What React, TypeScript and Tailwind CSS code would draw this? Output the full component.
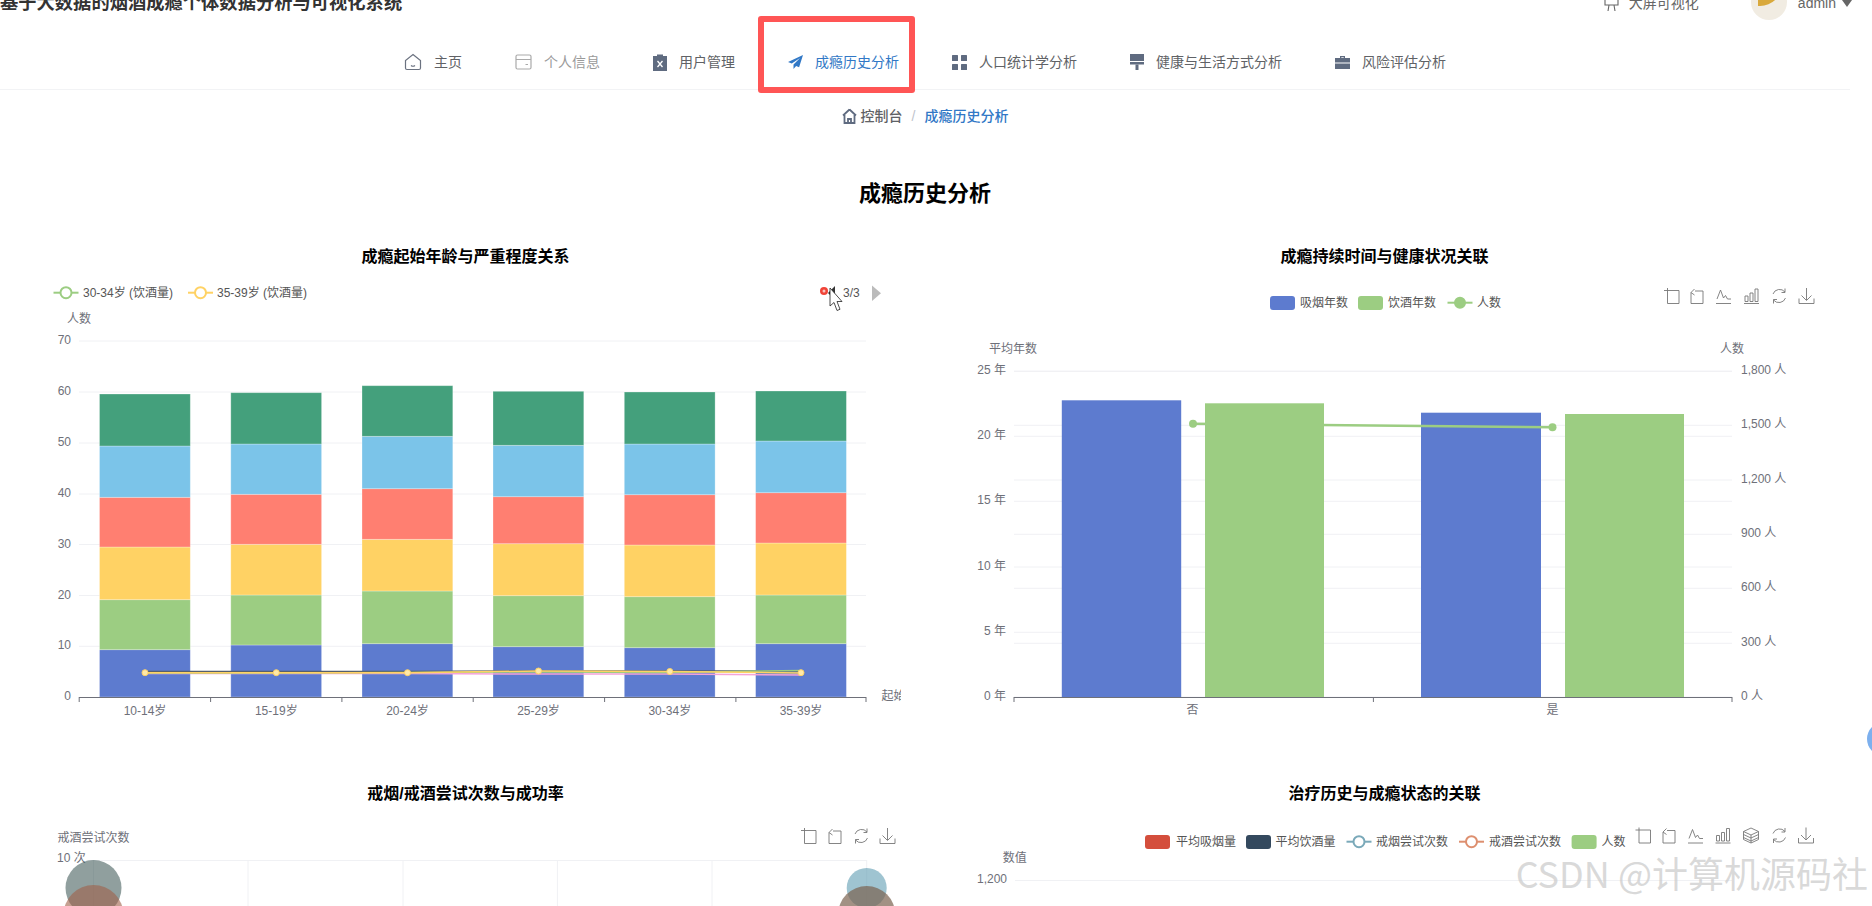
import type { ReactNode } from 'react'

const FONT = "font-['Liberation_Sans','Noto_Sans_CJK_SC',sans-serif]"

function HomeIcon() {
	return (
		<svg width="18" height="18" viewBox="0 0 18 18" fill="none" stroke="#6b7280" strokeWidth="1.2">
			<path d="M9 1.5 16.5 7.5V15a1.5 1.5 0 0 1-1.5 1.5H3A1.5 1.5 0 0 1 1.500 15V7.500Z" />
			<path d="M7 12.500q2 1.500 4 0" />
		</svg>
	)
}

function CardIcon() {
	return (
		<svg width="17" height="16" viewBox="0 0 17 16" fill="none" stroke="#aaaaaa" strokeWidth="1.200">
			<rect x="1" y="1" width="15" height="14" rx="1.500" />
			<path d="M1 5.500h15M10.500 10.500h2.500" />
		</svg>
	)
}

function ClipboardIcon() {
	return (
		<svg width="14" height="17" viewBox="0 0 14 17">
			<path d="M0 2h4V0.500h6V2h4v15H0Z" fill="#5f6b80" />
			<path d="M4.500 7 9.500 13M9.500 7 4.500 13" stroke="#fff" strokeWidth="1.300" />
		</svg>
	)
}

function PlaneIcon() {
	return (
		<svg width="15" height="14" viewBox="0 0 15 14">
			<path d="M15 0 0 7l3.800 1.500L12 3 5.500 9.500V14l2.600-3 3 1.200Z" fill="#3178c6" />
		</svg>
	)
}

function GridIcon() {
	return (
		<svg width="15" height="15" viewBox="0 0 15 15" fill="#5f6b80">
			<rect width="6" height="6" rx="0.500" />
			<rect x="9" width="6" height="6" rx="0.500" />
			<rect y="9" width="6" height="6" rx="0.500" />
			<rect x="9" y="9" width="6" height="6" rx="0.500" />
		</svg>
	)
}

function BrushIcon() {
	return (
		<svg width="14" height="16" viewBox="0 0 14 16" fill="#5f6b80">
			<rect width="14" height="7" />
			<rect y="8" width="14" height="2.500" />
			<rect x="5.500" y="10.500" width="3" height="5.500" />
		</svg>
	)
}

function CaseIcon() {
	return (
		<svg width="15" height="14" viewBox="0 0 15 14" fill="#5f6b80">
			<path d="M5 3V1h5v2h-1.300V2.200H6.300V3Z" />
			<path d="M0 3h15v4.500H0ZM0 8.500h15V14H0Z" />
		</svg>
	)
}

function NavItem({ icon, label, className }: { icon: ReactNode; label: string; className: string }) {
	return (
		<div className={`flex items-center gap-[12px] text-[14px] ${className}`}>
			{icon}
			<span>{label}</span>
		</div>
	)
}

function Label({
	x,
	y,
	children,
	anchor = 'start',
	fill = '#6e7079',
	size = 12,
}: {
	x: number
	y: number
	children: ReactNode
	anchor?: 'start' | 'middle' | 'end'
	fill?: string
	size?: number
}) {
	return (
		<text x={x} y={y} textAnchor={anchor} dominantBaseline="central" fill={fill} fontSize={size}>
			{children}
		</text>
	)
}

function Swatch({ x, y, color }: { x: number; y: number; color: string }) {
	return <rect x={x} y={y - 7} width="25" height="14" rx="3" fill={color} />
}

function LineMark({ x, y, color, filled }: { x: number; y: number; color: string; filled?: boolean }) {
	return (
		<g>
			<path d={`M${x} ${y}h25`} stroke={color} strokeWidth="2" />
			<circle cx={x + 12.5} cy={y} r={filled ? 5 : 5.500} fill={filled ? color : '#fff'} stroke={color} strokeWidth="2" />
		</g>
	)
}

function Tool({ x, y, kind }: { x: number; y: number; kind: string }) {
	return (
		<g transform={`translate(${x} ${y})`} fill="none" stroke="#777" strokeWidth="0.900">
			{kind === 'crop' && <path d="M0 2.500H15V15.500H3.500V0" />}
			{kind === 'back' && <path d="M5 3H13V15.500H1V4.500M1 4.500 4.500 1M1 4.500 4.500 7" />}
			{kind === 'line' && <path d="M0 15.500H15M1 11 4.500 2 7.500 10 9.500 7.500 11.500 11H15" />}
			{kind === 'bar' && <path d="M0 15.500H15M1 8H4V13.500H1ZM6 5H9V13.500H6ZM11 1H14V13.500H11Z" />}
			{kind === 'stack' && (
				<path d="M8 0.500 15.500 4V12L8 15.500 0.500 12V4ZM0.500 4 8 7.500 15.500 4M0.500 7 8 10.500 15.500 7M0.500 10 8 13.500 15.500 10M8 7.500V15.500" />
			)}
			{kind === 'refresh' && (
				<path d="M2 6A7 7 0 0 1 14 4M14 0.500V4.500H10.500M14.500 10A7 7 0 0 1 2.500 12M2.500 15.500V11.500H6" />
			)}
			{kind === 'save' && <path d="M7.500 0V12M2.500 7.500 7.500 12.500 12.500 7.500M0 10.500V15.500H15V10.500" />}
		</g>
	)
}

const stackColors = ['#5d7bcf', '#9ccd82', '#ffd264', '#ff7f71', '#7bc4e9', '#44a07c']
const stackX = [98.5, 229.800, 361, 492, 623.300, 754.600]
const stackTops = [
	[649.700, 599.700, 547, 497.300, 446, 394],
	[645, 595, 544.300, 494.300, 444, 392.700],
	[643.700, 591, 539.300, 488.700, 436.300, 385.700],
	[646.700, 595.700, 543.700, 496.700, 445.300, 391.300],
	[647.700, 596.700, 545, 494.700, 444, 392],
	[643.700, 595, 543, 492.700, 441, 391],
]
const centers = [144, 275.300, 406.500, 537.500, 668.800, 800]

function linePath(ys: number[]) {
	return ys.map((y, i) => `${i === 0 ? 'M' : 'L'}${centers[i]} ${y}`).join(' ')
}

function AgeChart() {
	const ticks = [
		[70, 341],
		[60, 392],
		[50, 443],
		[40, 494],
		[30, 544.500],
		[20, 595.500],
		[10, 646.300],
	]
	const cats = ['10-14岁', '15-19岁', '20-24岁', '25-29岁', '30-34岁', '35-39岁']
	return (
		<svg className="block" width="870" height="511" viewBox="30 270 870 511">
			<LineMark x={52.500} y={292.700} color="#9ccd82" />
			<Label x={82} y={292.700} fill="#555">30-34岁 (饮酒量)</Label>
			<LineMark x={187} y={292.700} color="#ffd264" />
			<Label x={216} y={292.700} fill="#555">35-39岁 (饮酒量)</Label>
			<circle cx="823" cy="291" r="4" fill="#f04438" />
			<circle cx="823" cy="291" r="1.500" fill="#f8c4c0" />
			<path d="M834 286V300L827 293Z" fill="#333" />
			<Label x={842} y={292.700} fill="#555">3/3</Label>
			<path d="M871 285.500V301L880 293.200Z" fill="#bbb" />
			<path d="M829 288V306L833 302.500 836 310.500 839 309.300 836 301.500 841 301.500Z" fill="#fff" stroke="#222" strokeWidth="0.800" />
			<Label x={66} y={319}>人数</Label>
			{ticks.map(([v, y]) => (
				<g key={v}>
					<path d={`M78 ${y}H865`} stroke="#f0f1f4" strokeWidth="1" />
					<Label x={70} y={y - 1} anchor="end">{v}</Label>
				</g>
			))}
			<Label x={70} y={696} anchor="end">0</Label>
			{stackTops.map((tops, i) =>
				tops.map((top, j) => (
					<rect
						key={`${i}-${j}`}
						x={stackX[i]}
						y={top}
						width="90.800"
						height={(j === 0 ? 697 : tops[j - 1]) - top}
						fill={stackColors[j]}
						stroke="#fff"
						strokeOpacity="0.350"
						strokeWidth="0.800"
					/>
				)),
			)}
			<g fill="none" strokeWidth="1.500">
				<path d={linePath([673.500, 673.500, 673.500, 674, 674, 675])} stroke="#f4a3d8" />
				<path d={linePath([671.500, 671.500, 671.500, 671, 671, 671])} stroke="#555f6e" />
				<path d={linePath([673, 673, 672.500, 672, 672.500, 670.500])} stroke="#9ccd82" />
				<path d={linePath([672.700, 672.700, 672.700, 671, 671.500, 673])} stroke="#ffd264" />
			</g>
			{centers.map((x, i) => (
				<circle key={x} cx={x} cy={i === 3 ? 671 : i === 4 ? 671.500 : 672.700} r="3" fill="#ffe9a8" stroke="#ffd264" strokeWidth="1" />
			))}
			<path d="M78 697.500H865" stroke="#6e7079" strokeWidth="1" />
			{[78.200, 209.600, 340.900, 472.200, 603.600, 734.900, 865].map((x) => (
				<path key={x} d={`M${x} 697V702`} stroke="#6e7079" strokeWidth="1" />
			))}
			{cats.map((c, i) => (
				<Label key={c} x={centers[i]} y={710.700} anchor="middle">{c}</Label>
			))}
			<Label x={880.500} y={696}>起始年龄</Label>
		</svg>
	)
}

function DurationChart() {
	const left = [
		['25 年', 371.300],
		['20 年', 436.300],
		['15 年', 501.300],
		['10 年', 567],
		['5 年', 632.300],
		['0 年', 697.300],
	] as const
	const right = [
		['1,800 人', 371.300],
		['1,500 人', 425.300],
		['1,200 人', 480],
		['900 人', 534.300],
		['600 人', 588.300],
		['300 人', 643.300],
		['0 人', 697.300],
	] as const
	const tools = [
		['crop', 1663],
		['back', 1689],
		['line', 1715],
		['bar', 1743],
		['refresh', 1770],
		['save', 1798],
	] as const
	return (
		<svg className="block" width="870" height="511" viewBox="949 270 870 511">
			<Swatch x={1269} y={303} color="#5d7bcf" />
			<Label x={1299} y={302.700} fill="#555">吸烟年数</Label>
			<Swatch x={1357} y={303} color="#9ccd82" />
			<Label x={1387} y={302.700} fill="#555">饮酒年数</Label>
			<LineMark x={1446.500} y={302.700} color="#9ccd82" filled />
			<Label x={1476} y={302.700} fill="#555">人数</Label>
			{tools.map(([k, x]) => (
				<Tool key={k} x={x} y={288} kind={k} />
			))}
			<Label x={988} y={348.700}>平均年数</Label>
			<Label x={1719} y={348.700}>人数</Label>
			{left.map(([t, y]) => (
				<g key={t}>
					<path d={`M1013 ${y}H1731`} stroke="#f0f1f4" strokeWidth="1" />
					<Label x={1005} y={y - 1} anchor="end">{t}</Label>
				</g>
			))}
			{right.map(([t, y]) => (
				<g key={t}>
					<path d={`M1013 ${y}H1731`} stroke="#f0f1f4" strokeWidth="1" />
					<Label x={1740} y={y - 1}>{t}</Label>
				</g>
			))}
			<rect x="1060.800" y="400.300" width="119.400" height="297" fill="#5d7bcf" />
			<rect x="1420" y="412.700" width="120" height="284.600" fill="#5d7bcf" />
			<path d="M1192 423.700 1551.500 427.300" stroke="#9ccd82" strokeWidth="2.500" />
			<circle cx="1192" cy="423.700" r="4" fill="#9ccd82" />
			<circle cx="1551.500" cy="427.300" r="4" fill="#9ccd82" />
			<rect x="1204" y="403.300" width="119" height="294" fill="#9ccd82" />
			<rect x="1564" y="414" width="119" height="283.300" fill="#9ccd82" />
			<path d="M1013 697.500H1731" stroke="#6e7079" strokeWidth="1" />
			{[1013, 1372.400, 1731].map((x) => (
				<path key={x} d={`M${x} 697V702`} stroke="#6e7079" strokeWidth="1" />
			))}
			<Label x={1191.500} y={710} anchor="middle">否</Label>
			<Label x={1551.500} y={710} anchor="middle">是</Label>
		</svg>
	)
}

function QuitChart() {
	const tools = [
		['crop', 800],
		['back', 827],
		['refresh', 852],
		['save', 879],
	] as const
	return (
		<svg className="block" width="870" height="120" viewBox="30 807 870 120">
			{tools.map(([k, x]) => (
				<Tool key={k} x={x} y={828} kind={k} />
			))}
			<Label x={56.500} y={837.700}>戒酒尝试次数</Label>
			<Label x={56} y={858}>10 次</Label>
			<path d="M85 860.500H866" stroke="#f0f1f4" strokeWidth="1" />
			{[92.500, 247, 402, 556.400, 711, 865.700].map((x) => (
				<path key={x} d={`M${x} 860V930`} stroke="#f0f1f4" strokeWidth="1" />
			))}
			<circle cx="92.500" cy="888" r="28" fill="#34504f" fillOpacity="0.550" />
			<circle cx="92.500" cy="915" r="30" fill="#a0604a" fillOpacity="0.600" />
			<circle cx="865.700" cy="888" r="20" fill="#5f9db3" fillOpacity="0.600" />
			<circle cx="865.700" cy="914.500" r="28.500" fill="#7a6250" fillOpacity="0.700" />
		</svg>
	)
}

function TreatmentChart() {
	const tools = [
		['crop', 1634.500],
		['back', 1661],
		['line', 1687],
		['bar', 1714.500],
		['stack', 1742],
		['refresh', 1770],
		['save', 1797.500],
	] as const
	return (
		<svg className="block" width="870" height="120" viewBox="949 807 870 120">
			<Swatch x={1144} y={842} color="#d44e3c" />
			<Label x={1175} y={841.700} fill="#555">平均吸烟量</Label>
			<Swatch x={1245} y={842} color="#34495e" />
			<Label x={1274.500} y={841.700} fill="#555">平均饮酒量</Label>
			<LineMark x={1345.500} y={841.700} color="#7aa9b9" />
			<Label x={1375} y={841.700} fill="#555">戒烟尝试次数</Label>
			<LineMark x={1458} y={841.700} color="#dd8f6f" />
			<Label x={1488} y={841.700} fill="#555">戒酒尝试次数</Label>
			<Swatch x={1570.600} y={842} color="#9ccd82" />
			<Label x={1600.500} y={841.700} fill="#555">人数</Label>
			{tools.map(([k, x]) => (
				<Tool key={k} x={x} y={827.500} kind={k} />
			))}
			<Label x={1001.700} y={857.700}>数值</Label>
			<Label x={1006} y={879} anchor="end">1,200</Label>
			<path d="M1014 880.500H1731" stroke="#f0f1f4" strokeWidth="1" />
		</svg>
	)
}

function Panel({ title, children }: { title: string; children: ReactNode }) {
	return (
		<section className="w-[870px]">
			<h3 className="flex h-[26px] items-center justify-center text-[16px] font-bold text-black">{title}</h3>
			{children}
		</section>
	)
}

export default function App() {
	return (
		<div className={`relative h-[906px] w-[1872px] overflow-hidden bg-white ${FONT}`}>
			<div className="w-[1850px]">
				<div className="-mt-[27px] flex h-[60px] w-[1872px] items-center justify-between">
					<h1 className="text-[18.300px] font-bold whitespace-nowrap text-[#333]">
						基于大数据的烟酒成瘾个体数据分析与可视化系统
					</h1>
					<div className="flex items-center text-[14px] text-[#666]">
						<svg width="15" height="16" viewBox="0 0 15 16" fill="none" stroke="#666" strokeWidth="1.100">
							<path d="M1 1h13v9H1ZM4 16l1-6M11 16l-1-6" />
						</svg>
						<span className="ml-[10px]">大屏可视化</span>
						<div className="relative ml-[52px] h-[36px] w-[36px] -translate-y-[1px] overflow-hidden rounded-full bg-[#f1ece2]">
							<div className="h-[22px] w-[24px] translate-x-[7px] rounded-br-full bg-[#d9a93c]" />
						</div>
						<span className="ml-[11px]">admin</span>
						<svg className="mr-[20px] ml-[6px]" width="10" height="7" viewBox="0 0 10 7">
							<path d="M0 0h10L5 7Z" fill="#666" />
						</svg>
					</div>
				</div>

				<nav className="flex h-[57px] items-center justify-center gap-[53px] border-b border-[#f2f3f5] pt-[2px]">
					<NavItem icon={<HomeIcon />} label="主页" className="text-[#606266]" />
					<NavItem icon={<CardIcon />} label="个人信息" className="text-[#9a9a9a]" />
					<NavItem icon={<ClipboardIcon />} label="用户管理" className="text-[#606266]" />
					<NavItem icon={<PlaneIcon />} label="成瘾历史分析" className="text-[#3178c6]" />
					<NavItem icon={<GridIcon />} label="人口统计学分析" className="text-[#606266]" />
					<NavItem icon={<BrushIcon />} label="健康与生活方式分析" className="text-[#606266]" />
					<NavItem icon={<CaseIcon />} label="风险评估分析" className="text-[#606266]" />
				</nav>

				<div className="flex h-[52px] items-center justify-center text-[14px]">
					<svg width="15" height="16" viewBox="0 0 15 16" fill="none" stroke="#5f6b80" strokeWidth="1.800">
						<path d="M7.500 1.500 14 7.500M7.500 1.500 1 7.500M2.500 7V15H12.500V7M6 15V11H9V15" />
					</svg>
					<span className="ml-[4px] font-medium text-[#606266]">控制台</span>
					<span className="mx-[9px] text-[#c0c4cc]">/</span>
					<span className="font-medium text-[#3178c6]">成瘾历史分析</span>
				</div>

				<h2 className="flex h-[102px] items-center justify-center text-[22px] font-bold text-black">成瘾历史分析</h2>

				<div className="flex justify-center gap-[49px]">
					<Panel title="成瘾起始年龄与严重程度关系">
						<AgeChart />
					</Panel>
					<Panel title="成瘾持续时间与健康状况关联">
						<DurationChart />
					</Panel>
				</div>
				<div className="flex justify-center gap-[49px]">
					<Panel title="戒烟/戒酒尝试次数与成功率">
						<QuitChart />
					</Panel>
					<Panel title="治疗历史与成瘾状态的关联">
						<TreatmentChart />
					</Panel>
				</div>
			</div>

			{/* red annotation box over the active menu item */}
			<div className="absolute top-[16px] left-[758px] h-[77px] w-[157px] rounded-[3px] border-[6px] border-[#ff5555]" />
			{/* floating assistant button cut by the right edge */}
			<div className="absolute top-[722px] left-[1867px] h-[34px] w-[34px] rounded-full bg-[#7db0ee]" />
			{/* CSDN watermark */}
			<div className="absolute top-[850px] right-[4px] text-[36px] leading-[44px] font-normal whitespace-nowrap text-[#c9c9c9]/70 [font-family:'Noto_Sans_CJK_SC',sans-serif]">
				CSDN @计算机源码社
			</div>
		</div>
	)
}
